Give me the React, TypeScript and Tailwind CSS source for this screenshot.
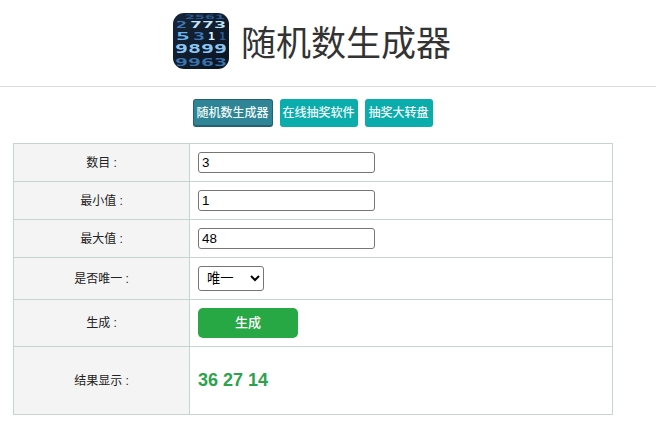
import { useState } from 'react';

const FONT = "font-['Liberation_Sans','Noto_Sans_CJK_SC',sans-serif]";

// digits of the logo: x, baseline, size, colour, width on the row
const DIGITS: [string, number, number, number, string, number][] = [
  ['2561', 12, 5.6, 6, '#2a5c92', 40],
  ['2', 3, 15.4, 9, '#3f78b4', 11],
  ['773', 17, 15.4, 9, '#c4e4fa', 36],
  ['5', 3, 26.8, 10, '#6db4ec', 14],
  ['3', 20, 26.8, 10, '#3f78b4', 12],
  ['1', 35, 26.8, 10, '#e4f4ff', 7],
  ['1', 46, 26.8, 10, '#2a5c92', 7],
  ['9899', 2, 40.3, 12, '#8cc8f2', 52],
  ['9963', 2, 53.3, 11, '#3a72ac', 52],
];

function Logo() {
  return (
    <svg width="56" height="56" viewBox="0 0 56 56" className="shrink-0 rounded-[11px]">
      <defs>
        <linearGradient id="logoBg" x1="0" y1="0" x2="1" y2="1">
          <stop offset="0" stopColor="#16263a" />
          <stop offset="1" stopColor="#0a1422" />
        </linearGradient>
      </defs>
      <rect width="56" height="56" fill="url(#logoBg)" />
      {DIGITS.map(([text, x, y, size, fill, width]) => (
        <text
          key={`${text}-${x}-${y}`}
          x={x}
          y={y}
          fontSize={size}
          fill={fill}
          fontWeight="700"
          fontFamily="'DejaVu Sans Mono', monospace"
          textLength={width}
          lengthAdjust="spacingAndGlyphs"
        >
          {text}
        </text>
      ))}
    </svg>
  );
}

function Row({ label, height, children }: { label: string; height: string; children: React.ReactNode }) {
  return (
    <tr className={height}>
      <td className="w-[176px] border border-[#c5d5cf] bg-[#f4f4f4] p-0 text-center text-[12px] text-[#222]">{label}</td>
      <td className="border border-[#c5d5cf] bg-white px-2 py-0 align-middle">{children}</td>
    </tr>
  );
}

export default function App() {
  const [count, setCount] = useState('3');
  const [min, setMin] = useState('1');
  const [max, setMax] = useState('48');

  const inputCls = 'block h-[21px] w-[177px] rounded-[3px] border border-[#767676] bg-white pl-[3px] pr-0.5 text-[13.33px] text-black';

  return (
    <div className={`min-h-screen bg-white ${FONT}`}>
      <header className="flex h-[87px] items-center justify-center gap-[12px] border-b border-[#dddddd] pb-[4px] pr-[32px]">
        <Logo />
        <h1 className="mt-[5px] text-[35px] font-normal leading-none text-[#333]">随机数生成器</h1>
      </header>

      <nav className="flex justify-center gap-[7px] pt-3 pr-[31px] text-[12px] font-medium text-[#f0fafa]">
        <a className="flex h-[28px] w-[80px] items-center justify-center rounded-[3px] border border-b-2 border-[#24606f] bg-[#2f8595]">随机数生成器</a>
        <a className="flex h-[28px] w-[78px] items-center justify-center rounded-[3px] bg-[#0bacac]">在线抽奖软件</a>
        <a className="flex h-[28px] w-[68px] items-center justify-center rounded-[3px] bg-[#0bacac]">抽奖大转盘</a>
      </nav>

      <table className="ml-[13px] mt-[16px] w-[600px] border-collapse">
        <tbody>
          <Row label="数目 :" height="h-[38px]">
            <input className={inputCls} value={count} onChange={(e) => setCount(e.target.value)} />
          </Row>
          <Row label="最小值 :" height="h-[38px]">
            <input className={inputCls} value={min} onChange={(e) => setMin(e.target.value)} />
          </Row>
          <Row label="最大值 :" height="h-[38px]">
            <input className={inputCls} value={max} onChange={(e) => setMax(e.target.value)} />
          </Row>
          <Row label="是否唯一 :" height="h-[42px]">
            <select className="block h-[25px] w-[66px] rounded-[3px] border border-[#767676] bg-white pl-1 text-[13.33px] text-black">
              <option>唯一</option>
              <option>不唯一</option>
            </select>
          </Row>
          <Row label="生成 :" height="h-[47px]">
            <button className="block h-[30px] w-[100px] rounded-[5px] bg-[#28a745] text-[13px] font-medium text-white">生成</button>
          </Row>
          <Row label="结果显示 :" height="h-[68px]">
            <span className="text-[18px] font-bold text-[#2ca24c]">36 27 14</span>
          </Row>
        </tbody>
      </table>
    </div>
  );
}
